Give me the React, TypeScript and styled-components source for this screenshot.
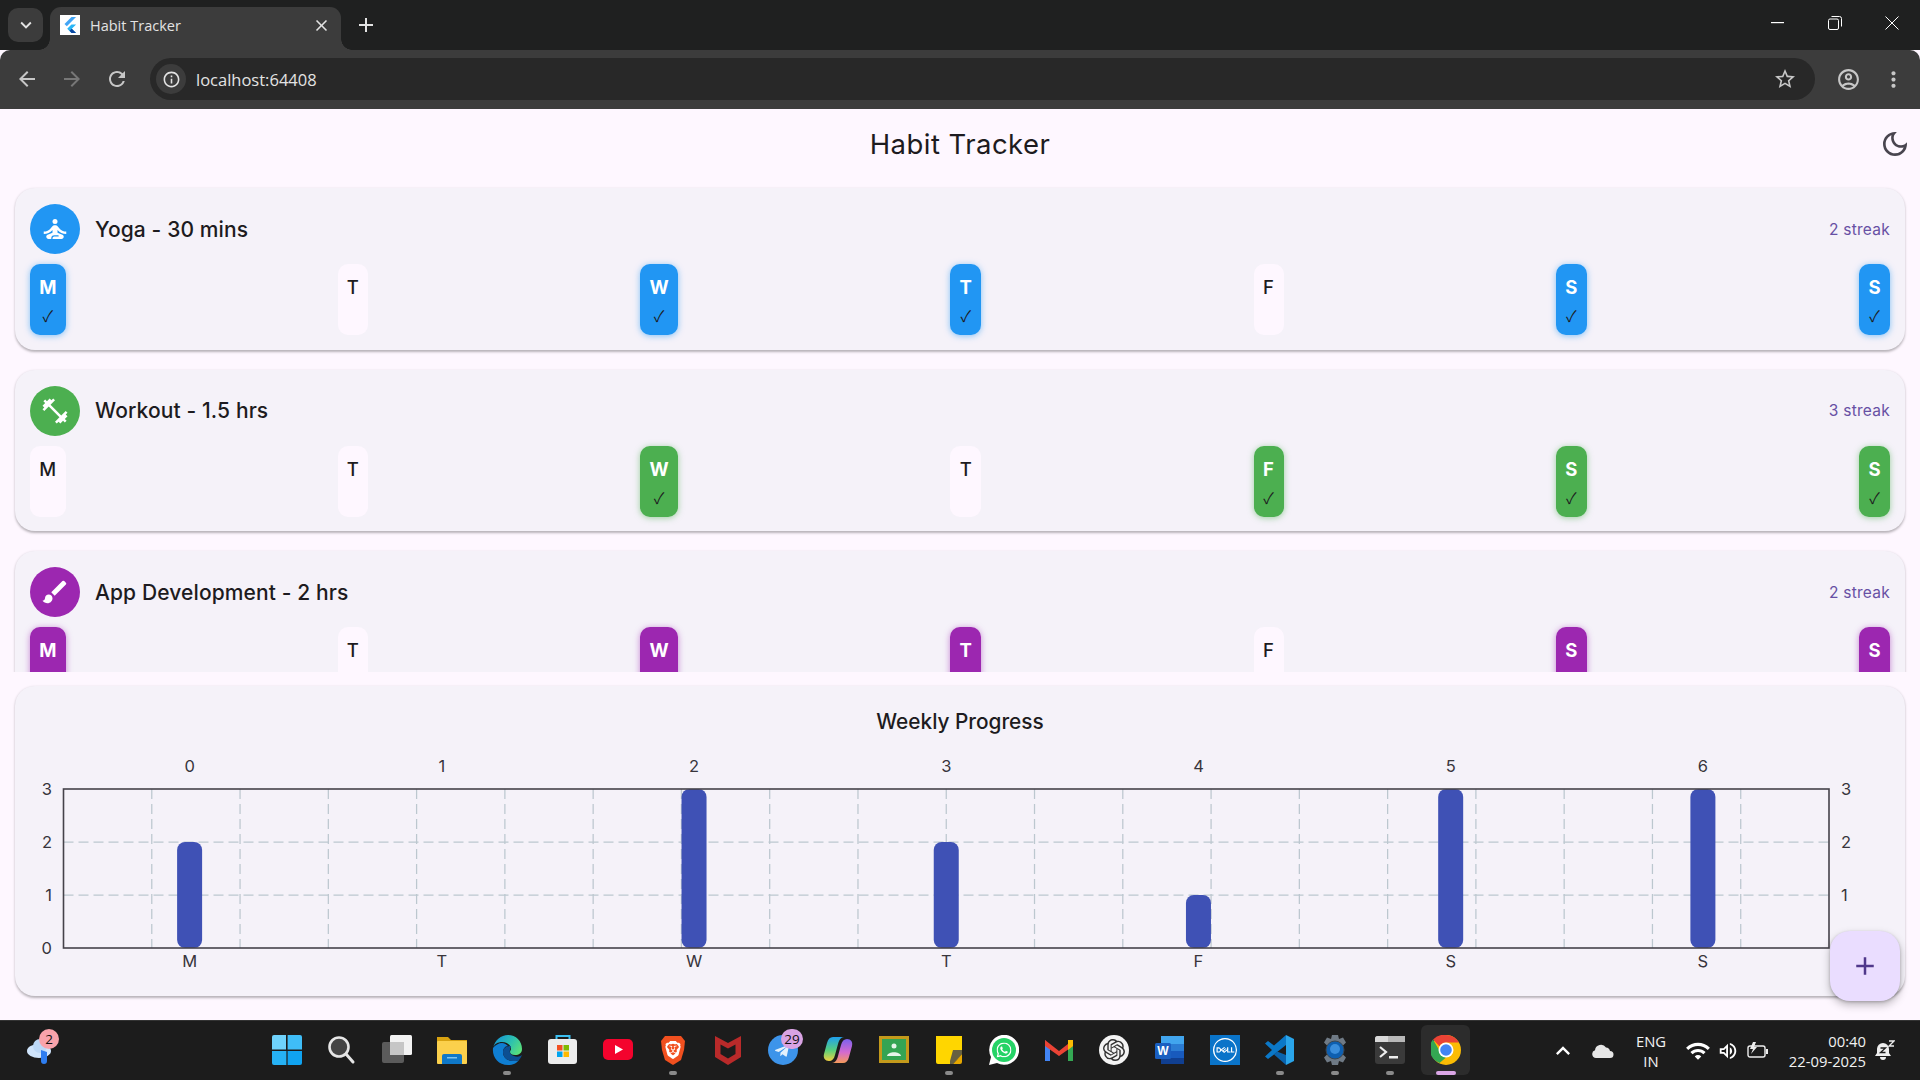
import React from "react";
import styled, {createGlobalStyle} from "styled-components";
import {
    MdAdd, MdArrowBack, MdArrowForward, MdBrush, MdClose, MdFitnessCenter, MdInfoOutline,
    MdKeyboardArrowDown, MdKeyboardArrowUp, MdMoreVert, MdOutlineAccountCircle, MdOutlineDarkMode,
    MdOutlineVolumeUp, MdRefresh, MdSelfImprovement, MdStarBorder, MdWifi,
} from "react-icons/md";
import {SiBrave, SiDell, SiOpenai, SiWhatsapp} from "react-icons/si";
import {FaTelegramPlane} from "react-icons/fa";

const GlobalStyle = createGlobalStyle`
  html, body {
    margin: 0;
    padding: 0;
    width: 1920px;
    height: 1080px;
    overflow: hidden;
    background: #fef7ff;
    font-family: Inter, "Noto Sans", sans-serif;
  }
  * { box-sizing: border-box; }
`

const Page = styled.div`
  width: 1920px;
  height: 1080px;
  display: flex;
  flex-direction: column;
  overflow: hidden;
`

// browser chrome
const TabStrip = styled.div`
  height: 50px;
  flex: none;
  background: #1f2020;
  display: flex;
  align-items: flex-end;
  padding-left: 8px;
  color: #fff;
`

const TabMenu = styled.div`
  width: 35px;
  height: 34px;
  margin-bottom: 8px;
  border-radius: 10px;
  background: #3c3c3c;
  display: flex;
  align-items: center;
  justify-content: center;
  font-size: 22px;
  color: #e3e3e3;
`

const Tab = styled.div`
  position: relative;
  width: 291px;
  height: 43px;
  margin-left: 7px;
  border-radius: 11px 11px 0 0;
  background: #3c3c3c;
  display: flex;
  align-items: center;
  padding: 0 10px 7px 10px;
  font-family: "Open Sans", sans-serif;
  font-size: 14.5px;
  color: #e3e3e3;
  &::before, &::after {
    content: "";
    position: absolute;
    bottom: 0;
    width: 11px;
    height: 11px;
  }
  &::before {
    left: -11px;
    background: radial-gradient(circle at 0 0, transparent 10.5px, #3c3c3c 11px);
  }
  &::after {
    right: -11px;
    background: radial-gradient(circle at 100% 0, transparent 10.5px, #3c3c3c 11px);
  }
`

const Favicon = styled.div`
  width: 20px;
  height: 20px;
  background: #fff;
  margin-right: 10px;
  display: flex;
`

const TabTitle = styled.div`
  flex: 1;
`

const NewTab = styled.div`
  width: 50px;
  height: 43px;
  padding-bottom: 7px;
  display: flex;
  align-items: center;
  justify-content: center;
  font-size: 24px;
  color: #e3e3e3;
`

const WindowControls = styled.div`
  margin-left: auto;
  height: 50px;
  display: flex;
  align-items: center;
  padding-bottom: 4px;
`

const WindowButton = styled.div`
  width: 57px;
  display: flex;
  justify-content: center;
`

const Toolbar = styled.div`
  height: 59px;
  flex: none;
  background: #3c3c3c;
  border-radius: 10px 10px 0 0;
  display: flex;
  align-items: center;
  padding: 0 14px 1px 15px;
  color: #c7c7c7;
`

const NavButton = styled.div<{$dim?: boolean}>`
  width: 45px;
  display: flex;
  font-size: 24px;
  color: ${p => (p.$dim ? "#777" : "#c7c7c7")};
`

const Omnibox = styled.div`
  width: 1665px;
  height: 42px;
  border-radius: 21px;
  background: #282828;
  display: flex;
  align-items: center;
  padding: 0 18px 0 6px;
`

const InfoBadge = styled.div`
  width: 30px;
  height: 30px;
  border-radius: 50%;
  background: #3c3c3c;
  display: flex;
  align-items: center;
  justify-content: center;
  font-size: 19px;
  color: #e3e3e3;
`

const Url = styled.div`
  flex: 1;
  margin-left: 10px;
  font-family: "Open Sans", sans-serif;
  font-size: 16.5px;
  color: #e3e3e3;
`

const ToolbarIcons = styled.div`
  margin-left: auto;
  display: flex;
  align-items: center;
  gap: 20px;
  font-size: 25px;
`

// app
const Main = styled.main`
  flex: 1;
  min-height: 0;
  position: relative;
  background: #fef7ff;
  display: flex;
  flex-direction: column;
`

const AppBar = styled.header`
  height: 70px;
  flex: none;
  position: relative;
  display: flex;
  align-items: center;
  justify-content: center;
  color: #1d1b20;
`

const AppTitle = styled.h1`
  margin: 0;
  font-size: 27.5px;
  font-weight: 400;
  letter-spacing: 0.45px;
`

const ThemeToggle = styled.div`
  position: absolute;
  right: 9px;
  top: 19px;
  font-size: 32px;
  display: flex;
  color: #49454f;
`

const HabitList = styled.div`
  height: 493px;
  flex: none;
  padding: 9px 15px 0;
  overflow: hidden;
  display: flex;
  flex-direction: column;
  gap: 20px;
`

const Card = styled.section`
  flex: none;
  background: #f5f2f9;
  border-radius: 20px;
  box-shadow: 0 1.5px 2.5px rgba(0, 0, 0, 0.28);
`

const HabitCard = styled(Card)`
  height: 161.5px;
  padding: 16px 15px 0;
`

const HabitHead = styled.div`
  display: flex;
  align-items: center;
  height: 50px;
`

const Avatar = styled.div<{$color: string}>`
  width: 50px;
  height: 50px;
  border-radius: 50%;
  background: ${p => p.$color};
  color: #fff;
  display: flex;
  align-items: center;
  justify-content: center;
  font-size: 30px;
  margin-right: 15px;
`

const HabitName = styled.div`
  flex: 1;
  font-size: 21px;
  font-weight: 500;
  letter-spacing: 0.12px;
  color: #1d1b20;
`

const Streak = styled.div`
  font-size: 15.5px;
  letter-spacing: 0.25px;
  color: #6750a4;
`

const DayRow = styled.div`
  margin-top: 10px;
  display: flex;
  justify-content: space-between;
`

const DayTile = styled.div<{$color?: string; $width: number}>`
  width: ${p => p.$width}px;
  height: 71px;
  border-radius: 10px;
  background: ${p => p.$color ?? "#fef7ff"};
  box-shadow: ${p => (p.$color ? `0 1px 6px ${p.$color}88` : "none")};
  color: ${p => (p.$color ? "#fff" : "#1d1b20")};
  font-weight: ${p => (p.$color ? 700 : 500)};
  display: flex;
  flex-direction: column;
  align-items: center;
  padding-top: 11px;
`

const DayLetter = styled.div`
  font-size: 18.5px;
  line-height: 24px;
`

const DayCheck = styled.div`
  font-family: "Noto Sans CJK JP", "DejaVu Sans", sans-serif;
  font-size: 15.5px;
  font-weight: 400;
  line-height: 24px;
  margin-top: 4px;
  color: #1d1b20;
`

const ChartCard = styled(Card)`
  height: 310px;
  margin: 14px 15px 0;
  padding: 21px 15px 0;
`

const ChartTitle = styled.h2`
  margin: 0 0 13px;
  height: 30px;
  line-height: 30px;
  text-align: center;
  font-size: 20.8px;
  font-weight: 500;
  color: #1d1b20;
`

const ChartSvg = styled.svg`
  display: block;
  width: 1860px;
  height: 225px;
  text {
    font-family: Inter, sans-serif;
    font-size: 16.5px;
    fill: #38353c;
  }
`

const Fab = styled.button`
  position: absolute;
  left: 1830px;
  top: 822px;
  width: 70px;
  height: 70px;
  border: none;
  border-radius: 20px;
  background: #eaddff;
  color: #4f378b;
  font-size: 30px;
  display: flex;
  align-items: center;
  justify-content: center;
  box-shadow: 0 4px 8px rgba(0, 0, 0, 0.26), 0 1px 3px rgba(0, 0, 0, 0.2);
`

// windows taskbar
const Taskbar = styled.footer`
  height: 60px;
  flex: none;
  background: #1c1c1c;
  border-top: 1px solid #333;
  display: flex;
  align-items: center;
  color: #fff;
  font-family: "Open Sans", sans-serif;
`

const Weather = styled.div`
  width: 259px;
  height: 100%;
  padding-left: 26px;
  display: flex;
`

const TaskIcons = styled.div`
  display: flex;
  height: 100%;
`

const TaskSlot = styled.div<{$active?: boolean; $narrow?: boolean}>`
  position: relative;
  width: ${p => (p.$narrow ? 30 : 55.2)}px;
  height: 100%;
  padding-bottom: 1px;
  display: flex;
  align-items: center;
  justify-content: center;
  &::before {
    content: "";
    display: ${p => (p.$active ? "block" : "none")};
    position: absolute;
    inset: 4px 3px 5px;
    border-radius: 6px;
    background: #2c2c2c;
  }
  svg { position: relative; }
`

const RunDot = styled.span<{$active?: boolean}>`
  position: absolute;
  bottom: 5px;
  left: 50%;
  transform: translateX(-50%);
  width: ${p => (p.$active ? 20 : 8)}px;
  height: 4px;
  border-radius: 2px;
  background: ${p => (p.$active ? "#dba6e6" : "#8a8a8a")};
`

const CountBadge = styled.span<{$color: string}>`
  position: absolute;
  top: 8px;
  left: calc(50% - 2px);
  min-width: 20px;
  height: 20px;
  padding: 0 3px;
  border-radius: 10px;
  background: ${p => p.$color};
  color: #111;
  font-size: 13.5px;
  line-height: 20px;
  text-align: center;
`

const Tray = styled.div`
  margin-left: auto;
  display: flex;
  align-items: center;
  height: 100%;
  padding-right: 16px;
`

const TrayIcon = styled.div<{$w: number}>`
  width: ${p => p.$w}px;
  display: flex;
  justify-content: center;
  font-size: 24px;
`

const TrayText = styled.div<{$align: string; $w: number}>`
  width: ${p => p.$w}px;
  font-size: 14.8px;
  line-height: 20px;
  text-align: ${p => p.$align};
  color: #f2f2f2;
`

const WifiSlot = styled(TrayIcon)`
  margin-left: 5px;
  font-size: 26px;
`

type Habit = { name: string; color: string; streak: string; icon: React.ReactNode; done: boolean[] };

const widths = [35.5, 30, 38, 31, 30, 31, 31];
const letters = ["M", "T", "W", "T", "F", "S", "S"];

const habits: Habit[] = [
    {name: "Yoga - 30 mins", color: "#2196f3", streak: "2 streak", icon: <MdSelfImprovement/>, done: [true, false, true, true, false, true, true]},
    {name: "Workout - 1.5 hrs", color: "#4caf50", streak: "3 streak", icon: <MdFitnessCenter/>, done: [false, false, true, false, true, true, true]},
    {name: "App Development - 2 hrs", color: "#9c27b0", streak: "2 streak", icon: <MdBrush/>, done: [true, false, true, true, false, true, true]},
];

const weekly = [2, 0, 3, 2, 1, 3, 3];

function FlutterLogo({size = 20}: { size?: number }) {
    return (
        <svg width={size} height={size} viewBox="0 0 20 20">
            <path d="M11.5 2h4.6L6.8 11.3 4.5 9z" fill="#42a5f5"/>
            <path d="M11.5 9.5h4.6l-4.3 4.3 4.3 4.2h-4.6l-4.3-4.2z" fill="#29b6f6"/>
            <path d="M9.5 15.8l2 2.2h4.6l-4.3-4.2z" fill="#0d47a1"/>
        </svg>
    );
}

function WeeklyChart() {
    // svg origin sits at page (30, 750)
    const left = 33.5, right = 1799, top = 39, bottom = 198;
    const group = (right - left) / 7;
    const unit = (bottom - top) / 3;
    const verticals = Array.from({length: 19}, (_, i) => left + ((right - left) / 20) * (i + 1));
    return (
        <ChartSvg viewBox="0 0 1860 225">
            {[1, 2].map(v => (
                <line key={v} x1={left} x2={right} y1={bottom - v * unit} y2={bottom - v * unit}
                      stroke="#bcc7cf" strokeWidth="1.25" strokeDasharray="10 5"/>
            ))}
            {verticals.map(x => (
                <line key={x} x1={x} x2={x} y1={top} y2={bottom}
                      stroke="#bcc7cf" strokeWidth="1.25" strokeDasharray="10 5"/>
            ))}
            {weekly.map((v, i) => v > 0 && (
                <rect key={i} x={left + group * (i + 0.5) - 12.5} y={bottom - v * unit} width="25" height={v * unit}
                      rx="8" fill="#3f51b5"/>
            ))}
            <rect x={left} y={top} width={right - left} height={bottom - top} fill="none" stroke="#45424a" strokeWidth="1.6"/>
            {weekly.map((_, i) => (
                <text key={i} x={left + group * (i + 0.5)} y={22} textAnchor="middle">{i}</text>
            ))}
            {letters.map((l, i) => (
                <text key={i} x={left + group * (i + 0.5)} y={217} textAnchor="middle">{l}</text>
            ))}
            {[0, 1, 2, 3].map(v => (
                <text key={v} x={22} y={bottom - v * unit + 6} textAnchor="end">{v}</text>
            ))}
            {[1, 2, 3].map(v => (
                <text key={v} x={1811} y={bottom - v * unit + 6}>{v}</text>
            ))}
        </ChartSvg>
    );
}

const box = {width: 30, height: 30, viewBox: "0 0 30 30"};

const WeatherIcon = () => (
    <svg {...box}>
        <ellipse cx="13" cy="16" rx="12" ry="7" fill="#cfe4fb"/>
        <circle cx="14" cy="11" r="7" fill="#bcd8f7"/>
        <path d="M15 15l6 2v9a3 3 0 0 1-6 0z" fill="#2e7df0"/>
    </svg>
);
const StartIcon = () => (
    <svg {...box}>
        <path d="M0 2a2 2 0 0 1 2-2h12v14.4H0z" fill="#6fd2fb"/>
        <path d="M15.6 0H28a2 2 0 0 1 2 2v12.4H15.6z" fill="#3fbdf7"/>
        <path d="M0 16h14.4v14H2a2 2 0 0 1-2-2z" fill="#26b2f5"/>
        <path d="M15.6 16H30v12a2 2 0 0 1-2 2H15.6z" fill="#10a3f0"/>
    </svg>
);
const SearchIcon = () => (
    <svg {...box}>
        <circle cx="12" cy="12" r="9.5" fill="#444" stroke="#e6e6e6" strokeWidth="2.6"/>
        <path d="M19 19l7 8" stroke="#e6e6e6" strokeWidth="3" strokeLinecap="round"/>
    </svg>
);
const TaskViewIcon = () => (
    <svg {...box}>
        <rect x="8" y="0" width="22" height="20" rx="1.5" fill="#f2f2f2"/>
        <rect x="0" y="7" width="22" height="21" rx="2" fill="#5b5b5b"/>
        <rect x="8" y="7" width="14" height="13" fill="#c6c6c6"/>
    </svg>
);
const ExplorerIcon = () => (
    <svg {...box}>
        <path d="M0 2h11l3 3h16v3H0z" fill="#d8a210"/>
        <rect y="6" width="30" height="23" rx="1" fill="#fbd04c"/>
        <path d="M5 29v-8a2 2 0 0 1 2-2h16a2 2 0 0 1 2 2v8z" fill="#0f78c8"/>
        <rect x="10" y="22" width="10" height="1.5" fill="#7cc4f0"/>
    </svg>
);
const EdgeIcon = () => (
    <svg {...box}>
        <defs>
            <linearGradient id="edgeTop" x1="0" y1="0.2" x2="1" y2="0.7">
                <stop offset="0" stopColor="#1492d8"/>
                <stop offset="0.55" stopColor="#2cc0b0"/>
                <stop offset="1" stopColor="#5ae07a"/>
            </linearGradient>
        </defs>
        <path d="M1 13C3 5 9 0 16 0c8 0 14 6 14 14 0 4-3 6-7 6-3 0-5-1-5-3 0-1 1-2 1-3 0-4-4-7-9-7-4 0-8 2-9 6z" fill="url(#edgeTop)"/>
        <path d="M1 13C0 22 6 30 16 30c5 0 9-2 11-5-2 1-4 1-6 1-6 0-10-4-10-9 0-3 2-6 5-6-2-2-4-3-6-3-3 0-7 2-9 5z" fill="#0f7ed2"/>
        <path d="M11 17c0 5 4 9 10 9 2 0 4 0 6-1 1-1 2-3 3-5-3 2-5 2-8 1-3-1-5-3-4-6 0-2 1-3 1-4-4 0-8 2-8 6z" fill="#0c4f92"/>
    </svg>
);
const StoreIcon = () => (
    <svg {...box}>
        <path d="M8.5 6V1h13v5" fill="none" stroke="#3cc0f2" strokeWidth="2"/>
        <rect y="4" width="29" height="25" rx="3" fill="#ececec"/>
        <rect x="9" y="10" width="5.5" height="5.5" fill="#f25022"/>
        <rect x="15.5" y="10" width="5.5" height="5.5" fill="#7fba00"/>
        <rect x="9" y="16.5" width="5.5" height="5.5" fill="#00a4ef"/>
        <rect x="15.5" y="16.5" width="5.5" height="5.5" fill="#ffb900"/>
    </svg>
);
const YoutubeIcon = () => (
    <svg {...box}>
        <rect y="4" width="30" height="21" rx="5" fill="#f4032d"/>
        <path d="M12 10l8 4.5-8 4.5z" fill="#fff"/>
    </svg>
);
const McafeeIcon = () => (
    <svg {...box}>
        <path d="M2 1l13 7 13-7v21l-13 8-13-8z" fill="#b92a2a"/>
        <path d="M7.5 9.5l7.5 4 7.5-4V19l-7.5 4.5L7.5 19z" fill="#1c1c1c"/>
    </svg>
);
const TelegramIcon = () => (
    <svg {...box}>
        <circle cx="15" cy="15" r="15" fill="#3d94ea"/>
        <g transform="translate(6 8)"><FaTelegramPlane size={16} color="#e4f1fc"/></g>
    </svg>
);
const CopilotIcon = () => (
    <svg {...box}>
        <defs>
            <linearGradient id="copA" x1="0.5" y1="0" x2="0.5" y2="1">
                <stop offset="0" stopColor="#1fa0ee"/>
                <stop offset="0.55" stopColor="#57d07c"/>
                <stop offset="1" stopColor="#f0d040"/>
            </linearGradient>
            <linearGradient id="copB" x1="0.5" y1="0" x2="0.5" y2="1">
                <stop offset="0" stopColor="#7a62ee"/>
                <stop offset="0.55" stopColor="#d46ad0"/>
                <stop offset="1" stopColor="#f59a5a"/>
            </linearGradient>
        </defs>
        <path d="M10 2h11c-3 0-5 3-6 7l-3 11c-1 4-3 6-6 6-4 0-6-3-5-7l3-11c1-4 3-6 6-6z" fill="url(#copA)"/>
        <path d="M20 28H9c3 0 5-3 6-7l3-11c1-4 3-6 6-6 4 0 6 3 5 7l-3 11c-1 4-3 6-6 6z" fill="url(#copB)"/>
    </svg>
);
const ClassroomIcon = () => (
    <svg {...box}>
        <rect width="30" height="27" y="1" fill="#c39a1b"/>
        <rect x="3" y="4" width="24" height="21" fill="#34a453"/>
        <circle cx="15" cy="11" r="2.5" fill="#e6f4ea"/>
        <path d="M8 21c1-5 13-5 14 0z" fill="#e6f4ea"/>
    </svg>
);
const StickyIcon = () => (
    <svg {...box}>
        <path d="M2 1h26v18l-9 10H4a2 2 0 0 1-2-2z" fill="#ffd600"/>
        <path d="M28 19v8a2 2 0 0 1-2 2h-7z" fill="#e6a700"/>
        <path d="M28 15v4l-9 10h-3v-3l3-11z" fill="#4c4c4c" opacity=".85"/>
    </svg>
);
const WhatsappIcon = () => (
    <svg {...box}>
        <path d="M0 30l2-8a15 15 0 1 1 6 6z" fill="#fff"/>
        <circle cx="15" cy="15" r="12" fill="#25d366"/>
        <g transform="translate(7.5 7.5)"><SiWhatsapp size={15} color="#fff"/></g>
    </svg>
);
const GmailIcon = () => (
    <svg {...box}>
        <path d="M1 5v21h5V12z" fill="#4285f4"/>
        <path d="M24 12v14h5V5z" fill="#34a853"/>
        <path d="M1 5l14 11L29 5v6L15 21 1 11z" fill="#ea4335"/>
        <path d="M24 5l5 0v6l-5 4z" fill="#fbbc04"/>
    </svg>
);
const ChatgptIcon = () => (
    <svg {...box}>
        <circle cx="15" cy="15" r="15" fill="#f4f4f4"/>
        <g transform="translate(4 4)"><SiOpenai size={22} color="#333"/></g>
    </svg>
);
const WordIcon = () => (
    <svg {...box}>
        <rect x="6" y="1" width="23" height="28" rx="2" fill="#2b7cd3"/>
        <rect x="6" y="1" width="23" height="8" fill="#41a5ee"/>
        <rect x="6" y="16" width="23" height="7" fill="#185abd"/>
        <rect x="6" y="23" width="23" height="6" fill="#103f91"/>
        <rect x="0" y="8" width="16" height="16" rx="1.5" fill="#1a5fc0"/>
        <text x="8" y="20" textAnchor="middle" fill="#fff" fontSize="12" fontWeight="700" fontFamily="Liberation Sans">W</text>
    </svg>
);
const DellIcon = () => (
    <svg {...box}>
        <rect width="30" height="30" fill="#0a74c9"/>
        <g transform="translate(3 3)"><SiDell size={24} color="#fff"/></g>
    </svg>
);
const VscodeIcon = () => (
    <svg {...box}>
        <path d="M21 0l8 4v22l-8 4z" fill="#2aa5ea"/>
        <path d="M21 0v10L9 19.5 3 24l-3-2.5 7-6.5-7-6.5L3 6l6 4.500z" fill="#0b78c8"/>
        <path d="M21 20v10L9 19.5l3-3z" fill="#0a63ad"/>
    </svg>
);
const SettingsIcon = () => (
    <svg {...box}>
        <path d="M12 0h6l1 4 4-1.5 3 5-3 3v9l3 3-3 5-4-1.5-1 4h-6l-1-4-4 1.5-3-5 3-3v-9l-3-3 3-5 4 1.5z" fill="#6f7a85"/>
        <circle cx="15" cy="15" r="9" fill="#0e5fb0" stroke="#3b4650" strokeWidth="1"/>
        <circle cx="15" cy="14" r="5" fill="#3a8edc"/>
    </svg>
);
const TerminalIcon = () => (
    <svg {...box}>
        <rect y="1" width="30" height="28" rx="3" fill="#3a3a3a"/>
        <path d="M0 4a3 3 0 0 1 3-3h27v6H0z" fill="#b8b8b8"/>
        <path d="M0 4a3 3 0 0 1 3-3h10v6H0z" fill="#d8d8d8"/>
        <path d="M5 12l6 5-6 5" fill="none" stroke="#eee" strokeWidth="2.2"/>
        <rect x="14" y="21" width="9" height="2.5" fill="#eee"/>
    </svg>
);
const ChromeIcon = () => (
    <svg {...box}>
        <circle cx="15" cy="15" r="15" fill="#fbbc04"/>
        <path d="M15 0a15 15 0 0 1 13 7.5H15a7.5 7.5 0 0 0-6.5 3.75L2 4.5A15 15 0 0 1 15 0z" fill="#ea4335"/>
        <path d="M2 4.5l6.5 11.25A7.5 7.5 0 0 0 15 22.5L8.500 28A15 15 0 0 1 2 4.5z" fill="#34a853"/>
        <circle cx="15" cy="15" r="7.5" fill="#fff"/>
        <circle cx="15" cy="15" r="5.8" fill="#4285f4"/>
    </svg>
);
const BraveIcon = () => (
    <svg {...box}>
        <path d="M7 1h16l4 5-1 9-3 10-8 5-8-5-3-10-1-9z" fill="#f1501f"/>
        <g transform="translate(6 6)"><SiBrave size={18} color="#fff"/></g>
    </svg>
);

const taskItems: { icon: React.FC; dot?: boolean; badge?: string; active?: boolean }[] = [
    {icon: StartIcon}, {icon: SearchIcon}, {icon: TaskViewIcon}, {icon: ExplorerIcon},
    {icon: EdgeIcon, dot: true}, {icon: StoreIcon}, {icon: YoutubeIcon}, {icon: BraveIcon, dot: true},
    {icon: McafeeIcon}, {icon: TelegramIcon, badge: "29"}, {icon: CopilotIcon}, {icon: ClassroomIcon},
    {icon: StickyIcon, dot: true}, {icon: WhatsappIcon}, {icon: GmailIcon}, {icon: ChatgptIcon},
    {icon: WordIcon}, {icon: DellIcon}, {icon: VscodeIcon, dot: true}, {icon: SettingsIcon, dot: true},
    {icon: TerminalIcon, dot: true}, {icon: ChromeIcon, dot: true, active: true},
];

export default function App() {
    return (
        <>
            <GlobalStyle/>
            <Page>
                <TabStrip>
                    <TabMenu><MdKeyboardArrowDown/></TabMenu>
                    <Tab>
                        <Favicon><FlutterLogo/></Favicon>
                        <TabTitle>Habit Tracker</TabTitle>
                        <MdClose size={19}/>
                    </Tab>
                    <NewTab><MdAdd/></NewTab>
                    <WindowControls>
                        <WindowButton>
                            <svg width="14" height="2"><rect width="13" height="1.2" fill="#fff"/></svg>
                        </WindowButton>
                        <WindowButton>
                            <svg width="14" height="14" viewBox="0 0 14 14" fill="none" stroke="#fff">
                                <rect x="0.5" y="3" width="10" height="10.5" rx="1.5"/>
                                <path d="M3.5.5h8a2 2 0 0 1 2 2v8"/>
                            </svg>
                        </WindowButton>
                        <WindowButton>
                            <svg width="14" height="14" viewBox="0 0 14 14" stroke="#fff">
                                <path d="M.5.5l13 13M13.5.5l-13 13"/>
                            </svg>
                        </WindowButton>
                    </WindowControls>
                </TabStrip>
                <Toolbar>
                    <NavButton><MdArrowBack/></NavButton>
                    <NavButton $dim><MdArrowForward/></NavButton>
                    <NavButton><MdRefresh/></NavButton>
                    <Omnibox>
                        <InfoBadge><MdInfoOutline/></InfoBadge>
                        <Url>localhost:64408</Url>
                        <MdStarBorder size={24}/>
                    </Omnibox>
                    <ToolbarIcons>
                        <MdOutlineAccountCircle/>
                        <MdMoreVert/>
                    </ToolbarIcons>
                </Toolbar>
                <Main>
                    <AppBar>
                        <AppTitle>Habit Tracker</AppTitle>
                        <ThemeToggle><MdOutlineDarkMode/></ThemeToggle>
                    </AppBar>
                    <HabitList>
                        {habits.map(h => (
                            <HabitCard key={h.name}>
                                <HabitHead>
                                    <Avatar $color={h.color}>{h.icon}</Avatar>
                                    <HabitName>{h.name}</HabitName>
                                    <Streak>{h.streak}</Streak>
                                </HabitHead>
                                <DayRow>
                                    {letters.map((l, i) => (
                                        <DayTile key={i} $width={widths[i]} $color={h.done[i] ? h.color : undefined}>
                                            <DayLetter>{l}</DayLetter>
                                            {h.done[i] && <DayCheck>✓</DayCheck>}
                                        </DayTile>
                                    ))}
                                </DayRow>
                            </HabitCard>
                        ))}
                    </HabitList>
                    <ChartCard>
                        <ChartTitle>Weekly Progress</ChartTitle>
                        <WeeklyChart/>
                    </ChartCard>
                    <Fab aria-label="add"><MdAdd/></Fab>
                </Main>
                <Taskbar>
                    <Weather>
                        <TaskSlot $narrow>
                            <WeatherIcon/>
                            <CountBadge $color="#f8a3ab">2</CountBadge>
                        </TaskSlot>
                    </Weather>
                    <TaskIcons>
                        {taskItems.map((item, i) => (
                            <TaskSlot key={i} $active={item.active}>
                                <item.icon/>
                                {item.badge && <CountBadge $color="#d9a3e3">{item.badge}</CountBadge>}
                                {item.dot && <RunDot $active={item.active}/>}
                            </TaskSlot>
                        ))}
                    </TaskIcons>
                    <Tray>
                        <TrayIcon $w={30}><MdKeyboardArrowUp size={28}/></TrayIcon>
                        <TrayIcon $w={50}>
                            <svg width="22" height="14" viewBox="0 0 22 14">
                                <path d="M4 14a4 4 0 0 1-1-7.8A6 6 0 0 1 14 3.5a4.5 4.5 0 0 1 4 3.5 3.5 3.5 0 0 1 0 7z" fill="#e6e6e6"/>
                            </svg>
                        </TrayIcon>
                        <TrayText $align="center" $w={46}>ENG<br/>IN</TrayText>
                        <WifiSlot $w={38}><MdWifi/></WifiSlot>
                        <TrayIcon $w={22}><MdOutlineVolumeUp/></TrayIcon>
                        <TrayIcon $w={38}>
                            <svg width="22" height="18" viewBox="0 0 22 18" fill="none" stroke="#eee" strokeWidth="1.4">
                                <rect x="1" y="4" width="17" height="11" rx="2"/>
                                <rect x="19" y="7" width="2" height="5" fill="#eee" stroke="none"/>
                                <path d="M6 0L3 7h3l-2 5 6-7H7l2-5z" fill="#eee" stroke="none"/>
                            </svg>
                        </TrayIcon>
                        <TrayText $align="right" $w={89}>00:40<br/>22-09-2025</TrayText>
                        <TrayIcon $w={38}>
                            <svg width="20" height="21" viewBox="0 0 20 21">
                                <path d="M8 3a6 6 0 0 1 6 6v4l2 3H0l2-3V9a6 6 0 0 1 6-6z" fill="#eee"/>
                                <path d="M5 17h6a3 3 0 0 1-6 0z" fill="#eee"/>
                                <path d="M5.5 8h5l-5 4.5h5" fill="none" stroke="#1c1c1c" strokeWidth="1.3"/>
                                <path d="M14 1h5l-5 5h5" fill="none" stroke="#eee" strokeWidth="1.3"/>
                            </svg>
                        </TrayIcon>
                    </Tray>
                </Taskbar>
            </Page>
        </>
    );
}
